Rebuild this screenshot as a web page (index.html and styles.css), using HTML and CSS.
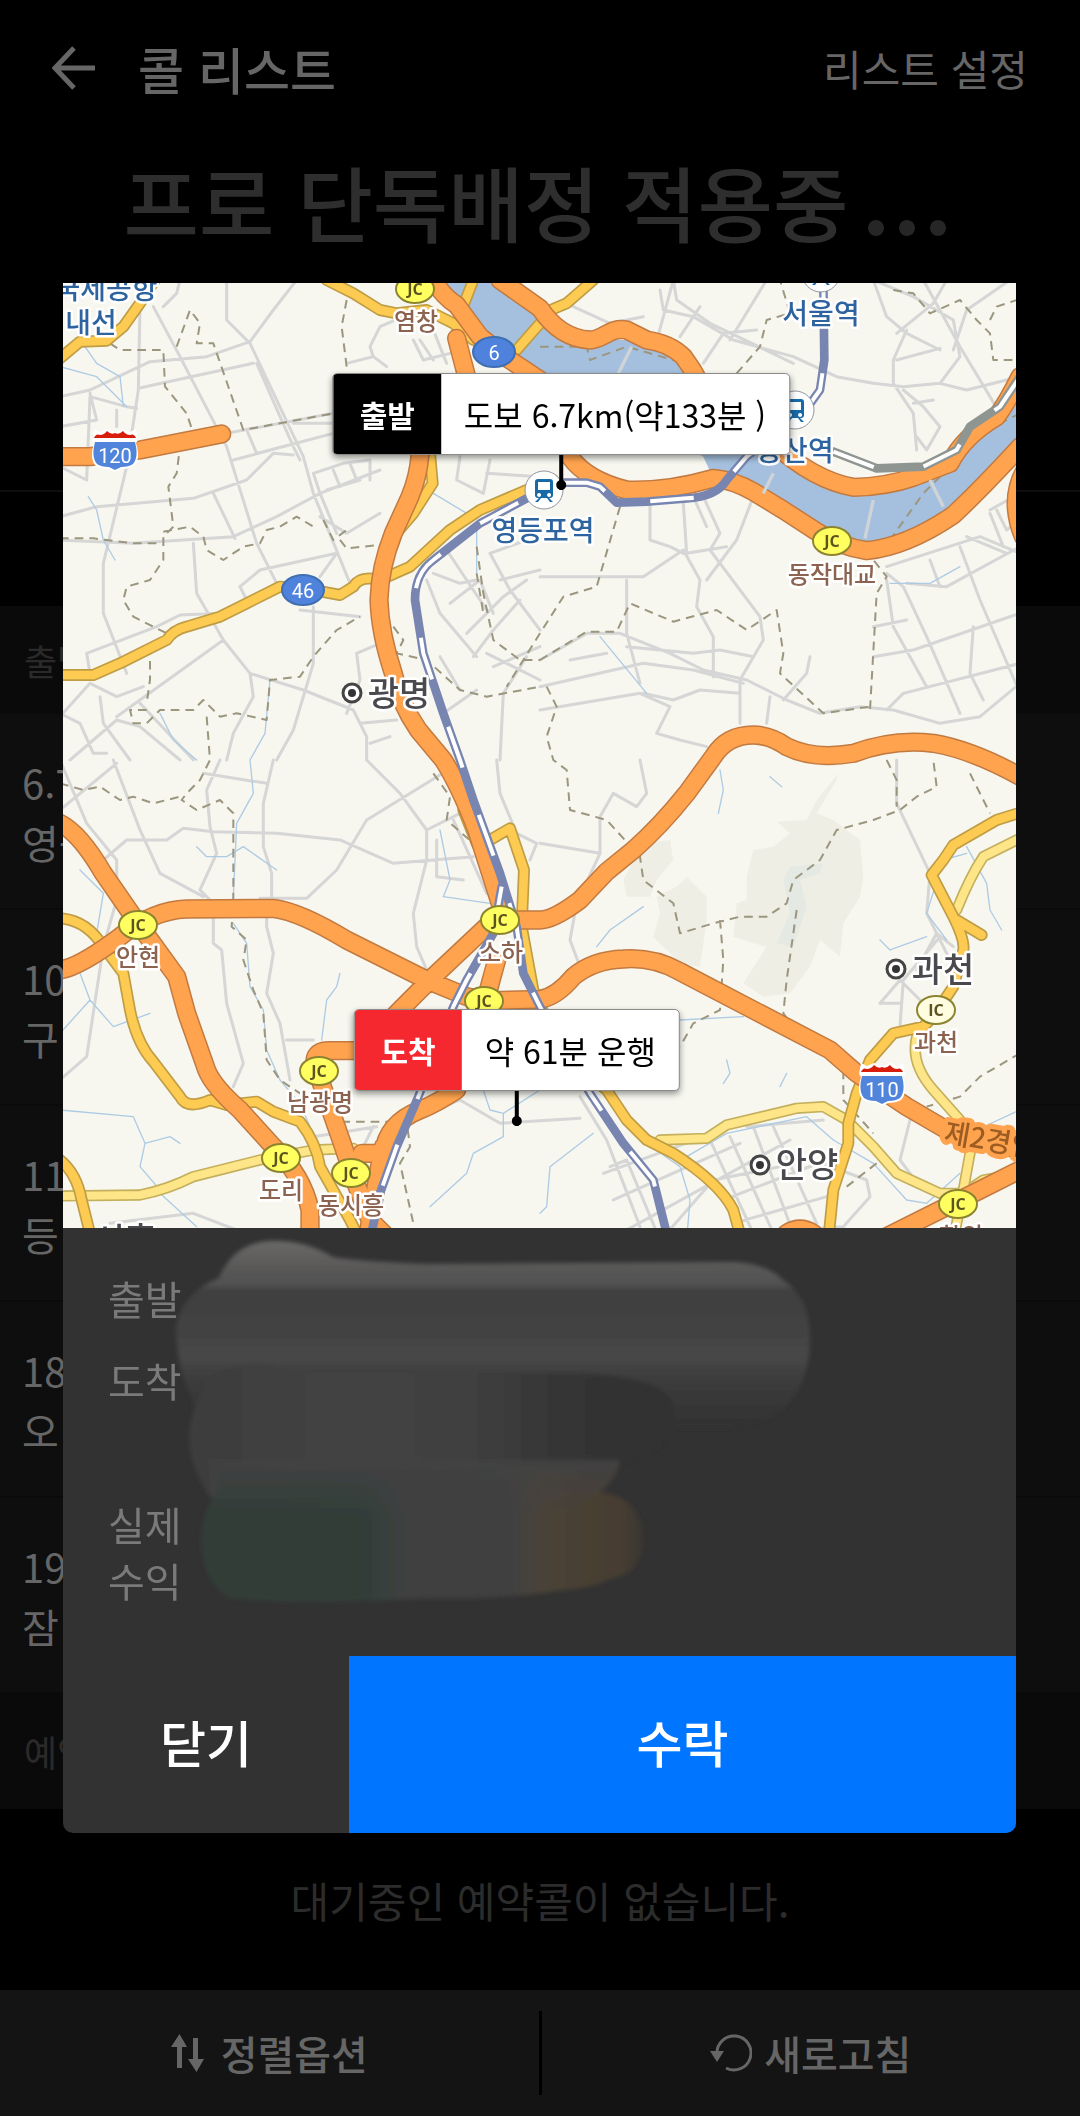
FILE: index.html
```html
<!DOCTYPE html>
<html lang="ko">
<head>
    <meta charset="UTF-8">
    <meta name="viewport" content="width=device-width, initial-scale=1.0">
    <title>콜 리스트</title>
    <link rel="stylesheet" href="styles.css">
</head>
<body>
    <header class="top-bar">
        <button class="back" aria-label="뒤로">
            <svg width="44" height="44" viewBox="0 0 44 44"><path d="M43 22H4M22 2L3 22l19 20" fill="none" stroke="currentColor" stroke-width="5"/></svg>
        </button>
        <h1>콜 리스트</h1>
        <a class="settings" href="#">리스트 설정</a>
    </header>

    <div class="banner">
        <span>프로 단독배정 적용중</span>
        <span class="dots"><i></i><i></i><i></i></span>
    </div>
    <div class="filters"></div>

    <main class="call-list">
        <h2 class="list-head">출발</h2>
        <div class="call"><span>6.7</span><span>영등포</span></div>
        <div class="call"><span>10</span><span>구</span></div>
        <div class="call"><span>11</span><span>등</span></div>
        <div class="call"><span>18</span><span>오</span></div>
        <div class="call"><span>19</span><span>잠</span></div>
        <h2 class="list-head reserved">예약</h2>
        <p class="empty">대기중인 예약콜이 없습니다.</p>
    </main>

    <footer class="bottom-bar">
        <button>
            <svg width="34" height="38" viewBox="0 0 34 38" fill="currentColor"><path d="M6 34V13H0L8.500 0 16 13h-5v21zM22 4h5v21h6l-7.500 13L17 25h5z"/></svg>
            정렬옵션
        </button>
        <span class="divider"></span>
        <button class="refresh">
            <svg width="42" height="38" viewBox="0 0 42 38"><path d="M7 20A17 17 0 1 1 16 34" fill="none" stroke="currentColor" stroke-width="3"/><path d="M0 17h14L7 28z" fill="currentColor"/></svg>
            새로고침
        </button>
    </footer>

    <div class="overlay">
        <section class="modal" role="dialog" aria-label="콜 상세">
            <div class="map">
                <svg class="map-canvas" viewBox="0 0 953 945">
                    <defs>
                        <path id="highways" d="M0 530H90L240 510 485 462
                            M1190 175L1220 290C1240 400 1110 420 1080 525Q1075 590 1050 650L1000 760Q960 860 957 960 960 1060 1000 1180 1020 1270 1075 1350L1150 1440Q1200 1520 1250 1650L1330 1900
                            M1120 0Q1150 50 1190 75L1260 170 1350 240 1440 300Q1500 400 1530 530 1580 600 1700 630 1820 635 1960 595 2020 600 2080 635L2170 690 2270 755Q2340 800 2420 812 2540 800 2680 705 2770 620 2880 500
                            M1320 0L1440 85Q1500 175 1590 180C1630 180 1650 140 1700 150L1760 180Q1830 190 1870 230 1900 270 1920 310 2000 440 2140 490 2260 600 2380 622 2480 620 2560 592L2670 550Q2710 470 2810 410 2840 370 2880 290
                            M2895 570Q2845 660 2890 770
                            M1320 1920H1440Q1480 1920 1560 1860L1640 1775 1720 1710Q1800 1640 1880 1540L1960 1430Q2000 1365 2080 1365 2130 1365 2180 1400 2260 1440 2380 1420 2500 1375 2620 1390 2740 1410 2890 1495
                            M0 1630Q60 1660 130 1780L220 1910 270 1980 350 2090 380 2200 440 2370Q460 2420 540 2490L640 2600Q730 2690 750 2790V2880
                            M0 2070Q60 2060 180 1970 280 1890 380 1887L640 1885Q720 1895 860 1980L1100 2100 1220 2150 1290 2162 1440 2158Q1490 2150 1540 2090 1600 2040 1690 2037 1780 2030 1860 2075L2080 2190 2310 2310 2390 2380 2540 2480 2660 2550 2880 2610
                            M1290 1930L1120 2090 1030 2180 900 2312H810Q750 2310 770 2370L850 2600 880 2690 930 2820 990 2880
                            M1310 2040L1280 2150
                            M1190 2430Q1130 2470 1080 2490 980 2530 970 2620H905 M970 2600Q950 2700 920 2890
                            M2460 2880L2640 2790 2760 2730 2880 2670 M2180 2860Q2220 2835 2260 2860"/>
                        <path id="roads" d="M0 235L60 185 140 182 190 140 240 70 285 0
                            M800 0L880 40 960 90 1010 100 1100 90 1180 130 1240 180
                            M1240 0L1205 90 M1600 0L1520 70 1460 95 M1440 130L1370 210
                            M0 1185H100L180 1150 320 1080Q340 1050 380 1040L480 1010 560 970 660 920 760 930 840 945 880 920Q900 885 960 900L1050 860 1170 750 1260 690 1400 630 1480 600
                            M1110 520L1118 610 1060 700 1000 770
                            M1210 1590L1250 1690 1290 1760 M1290 1680L1350 1645 1392 1770 1385 1940 1420 2130Q1500 2330 1640 2430L1700 2520 1760 2580 1840 2620Q1980 2710 2020 2790L2045 2880
                            M0 1915Q80 1920 130 2000L190 2080 210 2190Q230 2290 280 2345L360 2450Q380 2490 450 2460L500 2475 590 2465 640 2495 720 2525Q770 2590 780 2660L870 2820 900 2880
                            M0 2640Q50 2680 65 2760L95 2880
                            M2880 1598L2810 1620 2680 1695 2650 1740 2615 1785 2680 1910Q2715 1980 2710 2010L2680 2120 2620 2210 2590 2240 2500 2260 2430 2340 2390 2440 2365 2530V2590L2320 2730 2305 2880
                            M2690 1920L2765 1965"/>
                        <path id="lanes" d="M0 2748L240 2745Q320 2730 400 2690L600 2640 760 2610 880 2605
                            M2880 1675L2770 1730Q2730 1790 2690 1890
                            M2570 2270Q2550 2350 2620 2430L2700 2520Q2740 2570 2730 2620L2710 2730 2680 2880
                            M1800 2580L1940 2575 2000 2535 2210 2485 2290 2480 2360 2520 2440 2600 2510 2680 2640 2740H2710L2770 2700 2880 2680"/>
                        <path id="rail" d="M2290 0L2293 240 2280 330 2230 400 2060 530 2000 600Q1970 650 1880 655L1760 665 1670 668 1620 620 1580 608H1510L1400 655 1260 730 1120 840Q1065 880 1065 960L1090 1120 1150 1300 1200 1440 1240 1560 1320 1780 1370 1940 1390 2080 1440 2180 1590 2440 1690 2590 1780 2700 1825 2880
                            M1325 1820L1300 1960 1220 2100 1180 2180 1075 2450 1010 2600 960 2740 930 2880"/>
                        <path id="metro" d="M2320 515L2450 565 2590 560 2690 510 2730 440 2820 380 2880 290"/>
                        <symbol id="shield" viewBox="0 0 46 43">
                            <path d="M2 0L8 3 15 0 23 3 31 0 38 3 44 0 46 11 44 14Q49 30 42 37 37 40 29 40L23 43 17 40Q9 40 4 37-3 30 2 14L0 11Z" fill="#fff"/>
                            <path d="M2 9Q4 4 8 6 12 6 15 2 19 6 23 4 27 6 31 2 34 6 38 6 42 4 44 9Z" fill="#d91d0c"/>
                            <path d="M3 13H43Q47 28 41 35 37 38 29 38L23 41 17 38Q9 38 5 35-1 28 3 13Z" fill="#5185dc"/>
                        </symbol>
                        <symbol id="station" viewBox="0 0 40 40">
                            <circle cx="20" cy="20" r="19" fill="#fff" stroke="#8f959b"/>
                            <path d="M14 9h12q3 0 3 3v13q0 3-3 3h-1l4 4h-3l-3-4h-6l-3 4h-3l4-4h-1q-3 0-3-3V12q0-3 3-3zm0 3v8h12v-8zm1 11a2 2 0 1 0 .1 0zm10 0a2 2 0 1 0 .1 0z" fill="#1769a8" fill-rule="evenodd"/>
                        </symbol>
                        <symbol id="city" viewBox="0 0 24 24">
                            <circle cx="12" cy="12" r="9" fill="#fff" stroke="#444" stroke-width="3"/>
                            <circle cx="12" cy="12" r="4" fill="#333"/>
                        </symbol>
                    </defs>

                    <!-- terrain and roads are drawn on a grid three times finer than the labels -->
                    <g transform="translate(-3 -3) scale(.33333)">
                        <path class="forest" d="M2335 1480L2270 1560 2240 1620 2150 1625 2190 1660 2140 1700 2080 1710 2060 1790 2060 1860 2030 1870 2020 1970 2080 1990 2120 2000 2050 2110 2110 2150 2190 2140 2250 2060 2280 1980 2340 2030 2350 1930 2400 1850 2410 1790 2400 1680 2320 1620 2270 1600 2330 1500Z
                            M1750 1690L1830 1680 1840 1740 1790 1800 1770 1850 1700 1850 1690 1800Z M1880 1790L1940 1850 1940 1920 1920 2060 1860 2050 1780 1970 1800 1900 1790 1850 1850 1820Z"/>
                        <path class="lake" d="M2190 1760L2290 1750 2280 1780 2220 1800 2240 1880 2200 2000 2150 1990 2190 1900 2170 1800Z"/>
                        <path class="street" d="M500 0V120L570 190 730 530 760 640 870 910 M280 80L360 230 500 500 590 790 650 910 M0 350L90 330 270 245 440 230 570 185 640 90 710 0 M240 80L235 330 200 560 130 850 130 1000 200 1180 M235 325L580 250 M590 250L700 500 720 540 M310 80L350 40 360 0
                            M0 710L110 680 400 655 560 600 640 520 700 525 M460 640L525 775 M0 780L220 790 520 770 650 710 780 640 M500 460L820 400 M560 450L590 520 820 460 M520 540L820 460 M700 430H820
                            M0 560L80 600 90 350 200 380 230 385 M90 340L110 420 0 440 M170 390V440 M400 790L410 940 490 1080 570 1180 580 1250 520 1360 500 1440 M540 920L560 960 M540 920L600 870 830 820 M780 640L830 760 M760 580L780 640 960 570 M760 580L850 550 930 540 930 600 M820 570L840 620 M870 550L890 600 M800 630L900 600
                            M830 820L780 890 M780 710L860 760 960 700 M760 980V1150L700 1350 650 1440 M720 990L900 1010 M570 1180L730 1230 880 1290 920 1370V1440 M900 1330L1010 1320 M930 1390L990 1370 M890 1120L960 1090 M890 1120L900 1200 860 1300
                            M80 1120L290 1040 M80 1120L90 1180 M290 1040L360 1005 480 1000 M0 1310L90 1210 170 1250 250 1220 M0 1300L60 1330 100 1420H140 M120 1250L130 1330 210 1440 M170 1310L490 1080 M240 1270L400 1440 M30 1440L170 1320 240 1340 360 1440
                            M860 250L940 230 930 200 960 140 1100 80 M940 230L980 260 M1060 180L1090 240 1170 220 M1080 180L1120 240 M1100 80L1120 150 1160 250 M1200 530L1190 600 1270 640 1290 540 M1280 580L1440 590 M1120 880L1200 910 1250 900 M1160 810L1280 990 M1100 900L1140 1000 1250 1130 M1170 970L1260 900 1300 1000
                            M1290 820L1350 930 1440 1050 M1290 820L1400 780 M1320 900L1440 870 M1220 1060L1330 950 1400 900 M1240 1130L1300 1050 1380 960 M1280 1120L1440 1200 M1300 1160L1440 1100 M1140 1130L1200 1230 M1320 1440L1330 1240 1400 1130 M1150 1300L1250 1230
                            M1800 30L1810 90 1900 110 2020 180 2200 230 2330 290 2440 310 2530 320 2640 310 2720 330 2880 290 M1750 110L1650 130 1540 80 M1840 0L1750 330 M1840 0L1850 60 1950 130 2200 250 M2010 180L2120 0 M1860 170L1920 80 M2090 150L1990 160 1930 250
                            M2440 0L2480 110 2540 160 2640 210 M2440 0L2560 50 2680 120 2700 230 2640 310 M2540 150L2500 240 2500 310 2560 400 2570 510 M2590 0L2700 200 2880 500 M2660 0L2620 70 2510 160 M2680 210L2720 90 2850 0 M2510 240L2640 205 M2530 330L2590 380 2640 440 2600 510 2570 470 M2560 370L2620 360
                            M1770 670V780L1830 800 1870 820 M1870 670L1880 820 2000 800 M1930 650L1980 760 1950 810 M1440 890H1750L1870 810 1920 900 1910 980 1960 1070 1960 1190 M1700 900L1700 1060 1740 1210 M1900 650L1940 740 M2080 650L2030 780 1940 900
                            M1950 810L2100 1010 2110 1080 2040 1200 2040 1330 M1440 1140L1580 1060 1680 1060 1830 1120 1930 1170 2060 1200 2180 1260 2280 1300 2400 1280 2500 1290 2640 1330 2760 1310 2880 1210 M1700 1100L1900 1120 1980 1110 2080 1130 M1530 1140L1640 1120
                            M1440 1220L1750 1150 1900 1170 2050 1210 M1440 1290L1740 1240 1830 1280 1790 1360 1860 1380 1940 1400 M1750 1240L1840 1260 1920 1230 2040 1240 M2120 1330L2130 1250 M2170 1260L2240 1180 2250 1130
                            M2480 880L2530 920 2600 1070 2700 1300 M2480 900L2500 1040 2600 1220 M2480 860L2760 770 2880 820 M2610 840L2640 920 M2700 800L2760 960 2880 1240 M2440 1130L2560 1110 2880 1000 M2440 1040L2540 1020 M2740 1040L2730 1180 2770 1260 M2480 1290L2530 1240 2880 1150 M2540 910L2660 920 2880 800 M2790 690L2880 640 M2790 700L2830 800 M2810 690L2840 750 2880 720 M2720 770L2840 820
                            M0 1590L170 1450 M0 1440L80 1630 170 1740 170 1860 130 2000 80 2330 0 2400 M160 1440L240 1650 300 1780 430 1850 M130 1740L200 1680 320 1680 370 1645 460 1655 650 1660 840 1680 1000 1750 1240 1730 M480 1440L440 1530 450 1640 470 1720 420 1830 450 1860 M640 1440L610 1570V1700L635 1780V1850
                            M600 1855H740L830 1770 920 1620 1180 1460 M920 1440L1020 1540 1100 1650V1740L1060 1900 1070 2000 1100 2070 M1100 1650L1200 1600 M1130 1680L1130 1790 1210 1800 M1180 1620L1280 1840 M430 1480L620 1510 M460 1910L460 1990 485 2010 500 2170 550 2350 520 2420 M620 1910V1940L640 2020 620 2140 660 2230 690 2400 M680 2280L760 2280
                            M760 2570L950 2540 M940 2540L910 2600 M1090 2500L1200 2460 1320 2530 1560 2515 M150 2830L400 2800 530 2850 M1310 1440L1320 1540 1370 1660 1430 1690 1410 1740
                            M1740 1440L1760 1540 1730 1580 1660 1540 1620 1610V1720L1440 1690 M1620 1720L1550 1870 1530 1980 1560 2060 M2510 1440V1570L2610 1780 2600 1900 2640 1980 2700 2100 M2570 2070L2630 1960 2680 2000 M2460 2170L2520 2100 2580 2160 M2460 2170H2520 M2640 1970L2530 2100 2520 2240
                            M1560 2450L1640 2580 1740 2840 M1630 2680L1960 2560 M1660 2760L2040 2590 M1700 2850L2190 2580 M1820 2860L1960 2700 2260 2640 M1950 2580L2080 2860 M2010 2570L2140 2860 M2080 2540L2200 2860 M2140 2540L2270 2830 M1990 2760L2300 2640 M2020 2830L2300 2750 M2260 2640L2420 2700 2430 2750 2350 2840 2060 2860 M1650 2660L1700 2640 1800 2880 M2060 2540L2290 2520 M2550 2520L2520 2640 2580 2720"/>
                        <path class="water" d="M1120 0L1260 170 1440 300 1700 400 1930 530 1960 595 2080 635 2270 755 2420 812 2540 790 2680 705 2880 500V300L2810 410 2670 550 2380 622 2260 590 2140 490 1920 310 1870 230 1760 180 1590 180 1440 85 1320 0Z"/>
                        <path class="stream" d="M0 260L110 290 160 340 200 380 M75 200L110 250 180 290 190 380 M85 650L110 690 130 780 165 840 M300 1300L340 1380 410 1440 M630 1200L615 1360 570 1440 M570 1440L580 1540 530 1630 520 1850 M1120 640L1220 700 M1250 750V880 M1620 1070L1760 1240 M2490 910L2610 910 2700 860
                            M520 1930L560 1990 570 2120 610 2190 620 2310 660 2400 720 2470 750 2540 M410 1700L440 1730 500 1730 550 1700 650 1770 M60 1770L130 1840 110 1960 M60 2080L90 2160 0 2260 M90 2160L160 2240 270 2200 M0 2490L220 2510 255 2590 240 2660 300 2730 M255 2590L330 2570 360 2590 M300 2740L410 2840
                            M840 2080L830 2120 800 2160 785 2280 M1270 2430L1290 2490 1330 2500 1440 2430 M1330 2500V2570L1240 2620 1220 2680 1110 2780 M1140 1650L1170 1800 1150 1850 1290 1870 M1980 1470L1990 1530 1975 1600 M2130 1490L2165 1520 M1750 1880L1650 1950 1610 2000 M2460 1980L2490 2010 2600 1970
                            M2720 1700L2780 1810 2790 1890 2825 1950 M2720 1720L2650 1740 2600 1900 2660 1980 M1860 2220L2050 2210 M1600 2560L1470 2660 1460 2780 1440 2800 M1760 2590L1860 2660 1890 2760 1880 2880 M1880 2630L2000 2560 2240 2510 2320 2580 2440 2650 2540 2760 2600 2770 2700 2680 M2880 2490L2750 2550 M2000 2340L2010 2380 1990 2410 M2180 2380L2160 2420"/>
                        <path class="border-line" d="M150 190L180 210H310L315 320 380 400 400 460 360 500 350 580 325 620 340 740 310 770V840L270 900 200 920 190 960 220 1010 320 1060 270 1110V1200L260 1270 M260 1290L210 1290 220 1330 260 1330 300 1290 400 1290 430 1260 480 1310 530 1300 620 1320 630 1200 720 1190 760 1130 830 1050 900 1010
                            M0 775L100 775 220 790 310 790 M310 755L390 740 430 770 440 810 490 840 550 800 600 790 620 750 660 740 710 710 760 740 M350 200L390 90 420 130 410 190 460 190 550 450 820 400 M860 60L845 140 860 260 M790 720L820 780 860 750 M840 780L860 805 960 795
                            M440 1310L450 1440 420 1500 380 1540 365 1560 410 1590 480 1560 520 1600 520 1850 515 1940 560 1980 550 2040 580 2130 610 2200 620 2340 660 2400 720 2440 M0 1510L70 1530 120 1520 180 1560 220 1550 280 1570 360 1550
                            M1000 1040L1030 1080 1010 1120 1100 1140 1200 1230 1280 1250 1440 1220 M1250 800L1270 940 1300 1080 1380 1140 1440 1140 M1250 880L1270 1000 M1440 1140L1580 1055 1670 1055 1710 970 1840 1025 1970 990 2060 1050 2150 990 2170 1120 2160 1180 2290 1300 2430 1280 2430 1290 2450 940 2480 890 2440 840
                            M1680 680L1610 920 1510 950 1440 1060 1340 1220 M2030 280L2100 200 2120 120 2190 100 2160 0 M2500 30L2560 40 2610 100 2700 60 2750 120 2790 160 2800 240 2860 240 M2790 120L2810 80 2870 60 M1440 200H1580L1590 240 1700 200 1840 240 M2880 400L2780 450 2590 640 2490 780 M1710 630L1950 610
                            M1460 1220L1490 1280 1460 1370 1480 1440 1520 1470 1530 1590 1640 1620 1740 1730 1750 1800 1840 1870 1860 1960 1960 1930 2040 1910 2120 1910 2180 1870 2200 1800 2280 1740 2330 1650 2440 1620 2520 1590 2570 1550 2630 1520 2620 1440 M1980 1920L1990 2040 1980 2190 1900 2230 1860 2300
                            M2210 1890L2180 2100 2170 2200 2200 2240 2310 2300 2350 2360V2460L2440 2560 M2480 1440L2510 1500 2510 1580 M2730 1480L2790 1600 M2360 2720L2450 2650 M2880 2320L2760 2390 2700 2450 2600 2480 M800 2525L1040 2525 1050 2600 1020 2650 1060 2830 M1120 1480L1170 1550 1160 1620 1240 1690 1280 1780"/>
                        <use href="#lanes" class="lane-edge"/><use href="#lanes" class="lane"/>
                        <use href="#roads" class="road-edge"/><use href="#roads" class="road"/>
                        <use href="#highways" class="highway-edge"/><use href="#highways" class="highway"/>
                        <path class="bridge" d="M2440 660L2415 775 M2140 580L2110 640 M1715 200L1670 290 M2610 600L2650 680"/>
                        <use href="#rail" class="rail"/><use href="#rail" class="rail-dash"/>
                        <use href="#metro" class="metro"/><use href="#metro" class="rail-dash"/>
                    </g>

                    <use href="#station" x="461" y="187" width="40" height="40"/>
                    <use href="#station" x="712" y="107" width="40" height="40"/>
                    <use href="#station" x="738" y="-30" width="40" height="40"/>
                    <g class="label station-name">
                        <text x="43" y="16">국제공항</text>
                        <text x="28" y="50">내선</text>
                        <text x="758" y="41">서울역</text>
                        <text x="732" y="178">용산역</text>
                        <text x="480" y="258">영등포역</text>
                    </g>

                    <g class="junction">
                        <ellipse cx="352" cy="6" rx="19" ry="14"/><text x="352" y="12">JC</text>
                        <ellipse cx="75" cy="642" rx="19" ry="14"/><text x="75" y="648">JC</text>
                        <ellipse cx="437" cy="637" rx="19" ry="14"/><text x="437" y="643">JC</text>
                        <ellipse cx="421" cy="718" rx="19" ry="14"/><text x="421" y="724">JC</text>
                        <ellipse cx="256" cy="788" rx="19" ry="14"/><text x="256" y="794">JC</text>
                        <ellipse cx="218" cy="875" rx="19" ry="14"/><text x="218" y="881">JC</text>
                        <ellipse cx="288" cy="890" rx="19" ry="14"/><text x="288" y="896">JC</text>
                        <ellipse cx="769" cy="258" rx="19" ry="14"/><text x="769" y="264">JC</text>
                        <ellipse cx="895" cy="921" rx="19" ry="14"/><text x="895" y="927">JC</text>
                        <ellipse class="interchange" cx="873" cy="727" rx="19" ry="14"/><text x="873" y="733">IC</text>
                    </g>
                    <g class="label junction-name">
                        <text x="353" y="47">염창</text>
                        <text x="769" y="300">동작대교</text>
                        <text x="75" y="683">안현</text>
                        <text x="438" y="678">소하</text>
                        <text x="257" y="828">남광명</text>
                        <text x="218" y="916">도리</text>
                        <text x="288" y="931">동시흥</text>
                        <text x="873" y="768">과천</text>
                        <text x="898" y="962">학의</text>
                    </g>
                    <text class="label highway-name" transform="translate(880 859) rotate(10)">제2경인</text>

                    <g class="route">
                        <ellipse cx="431" cy="69" rx="21" ry="15"/><text x="431" y="77">6</text>
                        <ellipse cx="240" cy="307" rx="21" ry="15"/><text x="240" y="315">46</text>
                        <use href="#shield" x="29" y="146" width="46" height="43"/><text x="52" y="180">120</text>
                        <use href="#shield" x="796" y="780" width="46" height="43"/><text x="819" y="814">110</text>
                    </g>

                    <use href="#city" x="277" y="398" width="24" height="24"/>
                    <use href="#city" x="821" y="674" width="24" height="24"/>
                    <use href="#city" x="685" y="870" width="24" height="24"/>
                    <g class="label city-name">
                        <text x="336" y="423">광명</text>
                        <text x="880" y="699">과천</text>
                        <text x="744" y="894">안양</text>
                        <text x="62" y="969">시흥</text>
                    </g>
                </svg>

                <div class="marker start">
                    <div class="callout"><strong>출발</strong><span>도보 6.7km(약133분 )</span></div>
                    <i class="stem"></i>
                </div>
                <div class="marker end">
                    <div class="callout"><strong>도착</strong><span>약 61분 운행</span></div>
                    <i class="stem"></i>
                </div>
            </div>

            <div class="details">
                <svg class="smudge" viewBox="0 0 953 428" aria-hidden="true">
                    <defs>
                        <linearGradient id="top" x1="0" y1="0" x2="0" y2="1">
                            <stop offset="0" stop-color="#6a6968"/><stop offset=".14" stop-color="#5a5958"/><stop offset=".24" stop-color="#505050"/><stop offset=".26" stop-color="#404040"/>
                            <stop offset=".5" stop-color="#434343"/><stop offset=".62" stop-color="#484848"/><stop offset=".74" stop-color="#3c3c3c"/><stop offset="1" stop-color="#323232"/>
                        </linearGradient>
                        <linearGradient id="middle" x1="0" y1="0" x2="1" y2="0">
                            <stop offset="0" stop-color="#3c3c3c"/><stop offset=".3" stop-color="#434343"/><stop offset=".55" stop-color="#414141"/><stop offset=".78" stop-color="#343434"/><stop offset="1" stop-color="#323232"/>
                        </linearGradient>
                        <linearGradient id="bottom" x1="0" y1="0" x2="1" y2="0">
                            <stop offset="0" stop-color="#303d38"/><stop offset=".36" stop-color="#303e39"/><stop offset=".46" stop-color="#3f4040"/><stop offset=".7" stop-color="#414141"/><stop offset=".78" stop-color="#4a4337"/><stop offset=".95" stop-color="#463d30"/><stop offset="1" stop-color="#3b3730"/>
                        </linearGradient>
                        <linearGradient id="fade" x1="0" y1="0" x2="0" y2="1">
                            <stop offset="0" stop-color="#424242"/><stop offset="1" stop-color="#424242" stop-opacity="0"/>
                        </linearGradient>
                        <filter id="soft" x="-5%" y="-5%" width="110%" height="110%"><feGaussianBlur stdDeviation="2"/></filter>
                    </defs>
                    <g filter="url(#soft)">
                        <path fill="url(#top)" d="M156 50Q170 16 205 13 240 11 270 29 300 34 364 36L671 34Q705 36 720 52 747 70 747 110 747 190 670 200H144Q113 150 113 100 118 65 156 50Z"/>
                        <path fill="url(#middle)" d="M150 145Q190 128 240 145H500Q612 145 612 185 610 225 555 236 550 260 530 280H156Q100 215 150 145Z"/>
                        <path fill="url(#bottom)" d="M156 244L557 236Q550 255 536 264 578 268 580 310 580 345 550 350 530 360 500 362 440 372 364 370 230 378 165 370 138 350 138 310 140 280 156 262Z"/>
                        <path fill="url(#fade)" d="M145 232H557Q550 255 536 264L500 290H150Z"/>
                    </g>
                </svg>
                <dl>
                    <dt>출발</dt>
                    <dt>도착</dt>
                    <dt class="income">실제<br>수익</dt>
                </dl>
            </div>

            <div class="actions">
                <button class="close">닫기</button>
                <button class="accept">수락</button>
            </div>
        </section>
    </div>
</body>
</html>
```

FILE: styles.css
```css
* {
    box-sizing: border-box;
}

body {
    margin: 0;
    min-height: 100vh;
    display: flex;
    flex-direction: column;
    background-color: #000;
    color: #666;
    font-family: "Noto Sans CJK KR", "Noto Sans", sans-serif;
}

button {
    padding: 0;
    border: none;
    background: none;
    color: inherit;
    font-family: inherit;
    cursor: pointer;
}

.top-bar {
    display: flex;
    align-items: center;
    height: 136px;
    padding: 0 52px;
}

.back {
    display: flex;
}

.top-bar h1 {
    margin: 0 auto 0 42px;
    font-size: 50px;
    font-weight: 500;
    line-height: 70px;
}

.settings {
    color: inherit;
    font-size: 42px;
    line-height: 60px;
    text-decoration: none;
}

.banner {
    display: flex;
    justify-content: center;
    align-items: baseline;
    gap: 20px;
    height: 354px;
    padding-right: 10px;
    color: #2e2e2e;
    font-size: 82px;
    font-weight: 500;
    line-height: 130px;
}

.dots {
    display: flex;
    gap: 15px;
}

.dots i {
    width: 16px;
    height: 16px;
    border-radius: 50%;
    background-color: #262626;
}

.filters {
    height: 116px;
    border-top: 2px solid #0e0e0e;
}

.call-list {
    flex: 1;
    display: flex;
    flex-direction: column;
}

.list-head {
    margin: 0;
    padding: 0 24px;
    background-color: #0a0a0a;
    color: #2a2a2a;
    font-size: 36px;
    font-weight: 400;
    line-height: 108px;
}

.list-head.reserved {
    line-height: 115px;
}

.call {
    display: flex;
    flex-direction: column;
    height: 196px;
    padding: 38px 22px;
    border-bottom: 2px solid #0a0a0a;
    background-color: #0e0e0e;
    font-size: 40px;
    line-height: 60px;
}

.empty {
    margin: auto;
    color: #2c2c2c;
    font-size: 42px;
}

.bottom-bar {
    display: flex;
    align-items: center;
    height: 126px;
    background-color: #141414;
}

.bottom-bar button {
    flex: 1;
    display: flex;
    justify-content: center;
    align-items: center;
    gap: 16px;
    font-size: 40px;
    font-weight: 500;
}

.bottom-bar .refresh {
    gap: 12px;
}

.divider {
    width: 3px;
    height: 84px;
    background-color: #000;
}

.overlay {
    position: fixed;
    inset: 0;
    display: flex;
    justify-content: center;
    align-items: center;
    padding: 0 64px 0 63px;
}

.modal {
    width: 100%;
    border-radius: 0 0 10px 10px;
    overflow: hidden;
    background-color: #323232;
}

/* map */
.map {
    position: relative;
    overflow: hidden;
    background-color: #f7f7f0;
}

.map-canvas {
    display: block;
    width: 100%;
}

.map-canvas g path,
.map-canvas g use {
    fill: none;
    stroke-linejoin: round;
    stroke-linecap: round;
}

.map-canvas .forest { fill: #eeeee5; }
.map-canvas .lake { fill: #e4e9e4; }
.map-canvas .water { fill: #a5c0de; }
.street { stroke: #d5d6d5; stroke-width: 9; }
.map-canvas .bridge { stroke: #cfd4d8; stroke-width: 10; stroke-linecap: butt; }
.stream { stroke: #aecbe4; stroke-width: 4; }
.map-canvas .border-line {
    stroke: #9c967e;
    stroke-width: 6;
    stroke-linecap: butt;
    stroke-dasharray: 26 18;
}
.lane-edge { stroke: #c4b05c; stroke-width: 34; }
.lane { stroke: #fee588; stroke-width: 24; }
.road-edge { stroke: #bf9d45; stroke-width: 36; }
.road { stroke: #fdca52; stroke-width: 26; }
.highway-edge { stroke: #c27a40; stroke-width: 58; }
.highway { stroke: #ffa34f; stroke-width: 49; }
.rail { stroke: #7885b0; stroke-width: 26; }
.metro { stroke: #8f9591; stroke-width: 26; }
.map-canvas .rail-dash {
    stroke: #fff;
    stroke-width: 12;
    stroke-linecap: butt;
    stroke-dasharray: 130 150;
}

.map-canvas text {
    text-anchor: middle;
}

.label {
    paint-order: stroke;
    stroke: #fff;
    stroke-width: 5px;
    stroke-linejoin: round;
    font-weight: 500;
}

.station-name { fill: #2d639e; font-size: 28px; }
.junction-name { fill: #8b6350; font-size: 24px; }
.city-name { fill: #4a4a4e; font-size: 34px; }

.map-canvas .highway-name {
    fill: #9c5c22;
    stroke: #ffa34f;
    stroke-width: 10px;
    font-size: 28px;
    text-anchor: start;
}

.junction ellipse { fill: #ffff60; stroke: #8d8430; stroke-width: 2px; }
.junction .interchange { fill: #fffde0; }
.junction text { fill: #5c5420; font: bold 16px "Open Sans", sans-serif; }

.route ellipse { fill: #4f82dc; stroke: #3f6fb0; stroke-width: 2px; }
.route text { fill: #fff; font: 20px Roboto, sans-serif; }

/* route markers */
.marker {
    position: absolute;
    display: flex;
    flex-direction: column;
    align-items: center;
    transform: translate(-50%, -100%);
}

.marker.start {
    left: 52.3%;
    top: 21.9%;
}

.marker.end {
    left: 47.6%;
    top: 89.2%;
}

.callout {
    display: flex;
    border: 1px solid #8a8a8a;
    border-radius: 5px;
    overflow: hidden;
    background-color: #fff;
    box-shadow: 0 3px 6px rgba(0, 0, 0, 0.4);
    color: #000;
    line-height: 80px;
    white-space: nowrap;
}

.callout strong {
    padding: 0 26px;
    background-color: #000;
    color: #fff;
    font-size: 30px;
}

.end .callout strong {
    background-color: #f5272f;
}

.callout span {
    padding: 0 23px;
    font-size: 32px;
}

.stem {
    position: relative;
    width: 4px;
    height: 35px;
    background-color: #000;
}

.stem::after {
    content: "";
    position: absolute;
    left: -3px;
    bottom: 0;
    width: 10px;
    height: 10px;
    border-radius: 50%;
    background-color: #000;
}

/* call details */
.details {
    position: relative;
    height: 428px;
    padding: 42px 45px;
}

.smudge {
    position: absolute;
    left: 0;
    top: 0;
    width: 100%;
}

.details dl {
    position: relative;
    margin: 0;
    color: #7a7a7a;
    font-size: 40px;
    line-height: 56px;
}

.details dt {
    margin-bottom: 26px;
}

.details .income {
    margin-top: 88px;
}

.actions {
    display: flex;
    height: 177px;
    color: #fff;
}

.actions button {
    padding-bottom: 8px;
    font-size: 50px;
    font-weight: 500;
}

.close {
    flex: 3;
}

.actions .accept {
    flex: 7;
    background-color: #0075ff;
}
```
